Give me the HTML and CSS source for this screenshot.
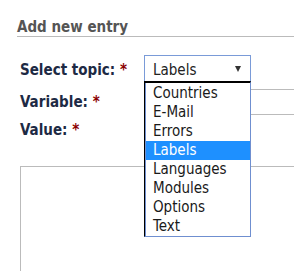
FILE: index.html
```html
<!DOCTYPE html>
<html>
<head>
<meta charset="utf-8" />
<title>Add new entry</title>
<link rel="stylesheet" href="styles.css">
</head>
<body>

<section class="entry">
  <h2 class="entry-title">Add new entry</h2>

  <div class="row row-topic">
    <label class="field-label">Select topic: <span class="req">*</span></label>
    <div class="select">
      <div class="select-box">
        <span class="select-value">Labels</span>
        <span class="select-arrow"></span>
      </div>
      <ul class="select-list">
        <li>Countries</li>
        <li>E-Mail</li>
        <li>Errors</li>
        <li class="active">Labels</li>
        <li>Languages</li>
        <li>Modules</li>
        <li>Options</li>
        <li>Text</li>
      </ul>
    </div>
  </div>

  <div class="row row-variable">
    <label class="field-label">Variable: <span class="req">*</span></label>
    <input type="text" class="text-input">
  </div>

  <div class="row-value">
    <label class="field-label">Value: <span class="req">*</span></label>
  </div>
  <textarea class="value-area"></textarea>
</section>

</body>
</html>
```

FILE: styles.css
```css
html, body {
  margin: 0;
  padding: 0;
  overflow: hidden;
  background: #fff;
}
body {
  font-family: "DejaVu Sans Condensed", "DejaVu Sans", sans-serif;
  font-stretch: condensed;
  font-size: 15px;
  width: 294px;
  height: 272px;
}
.entry {
  padding-top: 19px;
}
.entry-title {
  margin: 0 0 0 17px;
  font-size: 15px;
  line-height: 17px;
  font-weight: bold;
  color: #555;
  border-bottom: 1px solid #bbb;
}
.row {
  display: flex;
  align-items: flex-start;
  padding-left: 20px;
}
.row-topic {
  margin-top: 18px;
  position: relative;
  z-index: 2;
}
.row-variable {
  margin-top: 8px;
}
.field-label {
  display: block;
  width: 124px;
  flex: none;
  font-weight: bold;
  line-height: 18px;
  color: #1d2a44;
}
.row-topic .field-label {
  margin-top: 6px;
}
.row-variable .field-label {
  margin-top: 4px;
}
.req {
  color: #8b0000;
}

/* open select */
.select {
  position: relative;
  width: 107px;
}
.select-box {
  display: flex;
  align-items: center;
  justify-content: space-between;
  height: 25px;
  padding: 0 8px 0 8px;
  border: 1px solid #7a9bd8;
  border-bottom: none;
  color: #222;
  line-height: 18px;
}
.select-value {
  padding-top: 2px;
}
.select-arrow {
  width: 0;
  height: 0;
  margin-top: 1px;
  margin-right: 1px;
  border-left: 3.5px solid transparent;
  border-right: 3.5px solid transparent;
  border-top: 6px solid #333;
}
.select-list {
  position: absolute;
  left: 0;
  top: 26px;
  width: 107px;
  box-sizing: border-box;
  margin: 0;
  padding: 1px 0 0 1px;
  list-style: none;
  background: #fff;
  border-top: 2px solid #000;
  border-left: 1px solid #000;
  border-right: 1px solid #6f8fd0;
  border-bottom: 1px solid #6f8fd0;
  box-shadow: inset 1px 0 #6f8fd0;
}
.select-list li {
  height: 19px;
  line-height: 19px;
  padding-left: 7px;
  color: #1a1a1a;
}
.select-list li.active {
  background: #1e90ff;
  color: #fff;
}

.text-input {
  display: block;
  width: 150px;
  height: 26px;
  box-sizing: border-box;
  margin: 0;
  border: 1px solid #bbb;
  border-right: none;
  padding: 0;
  font: inherit;
}
.row-value {
  padding-left: 20px;
  margin-top: 6px;
}
.value-area {
  display: block;
  margin: 27px 0 0 20px;
  width: 274px;
  height: 105px;
  box-sizing: border-box;
  border: 1px solid #bbb;
  border-right: none;
  border-bottom: none;
  padding: 0;
  resize: none;
  font: inherit;
}
```
